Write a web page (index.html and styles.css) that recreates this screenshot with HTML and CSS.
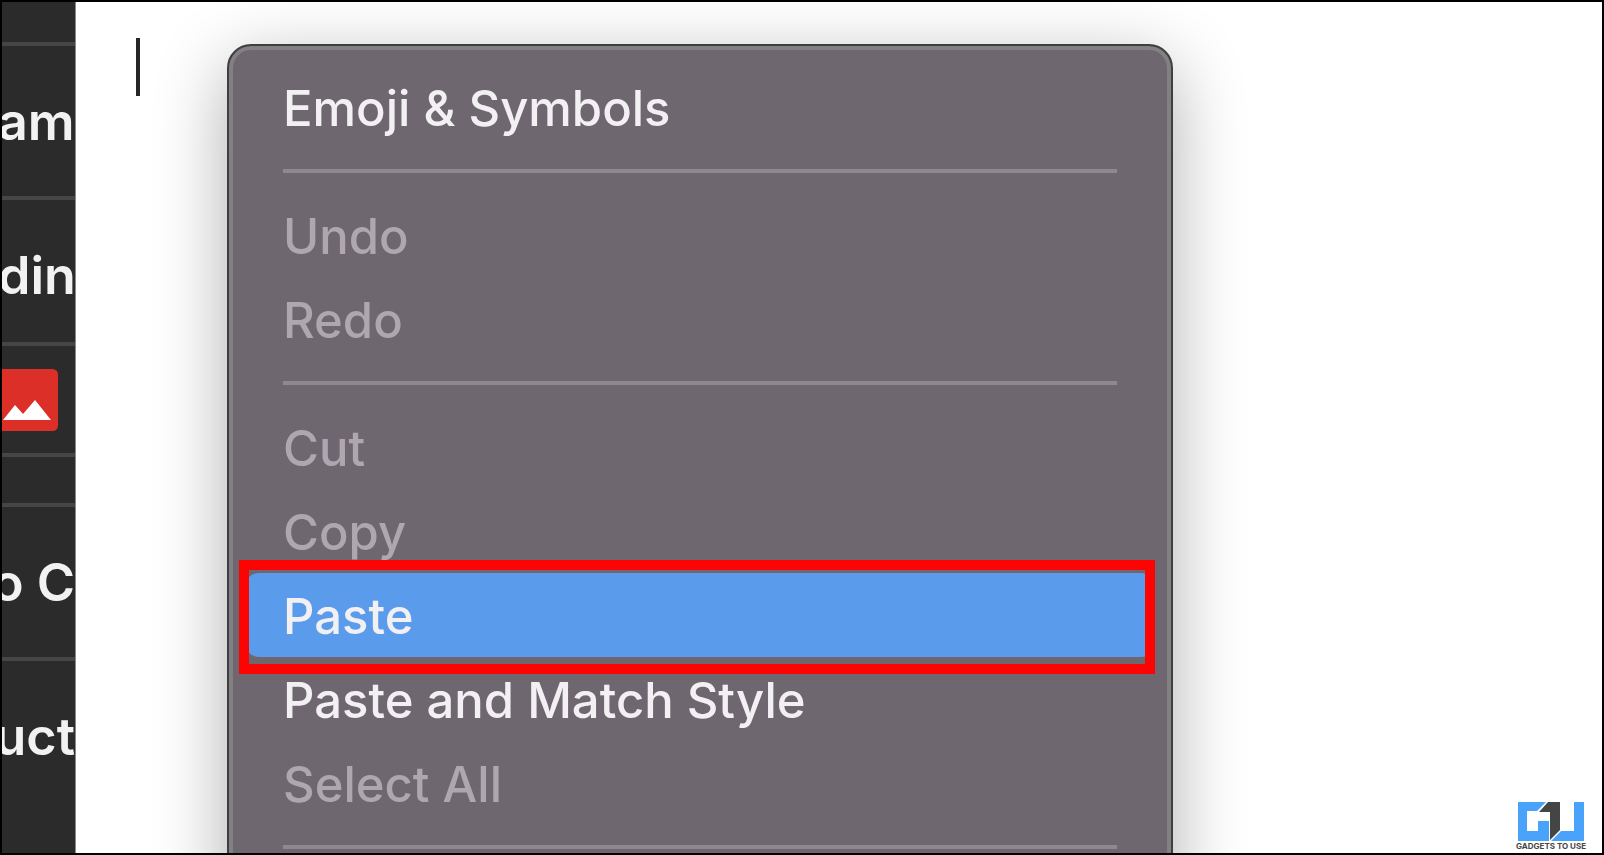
FILE: index.html
```
<!DOCTYPE html>
<html lang="en">
<head>
  <meta charset="UTF-8">
  <meta name="viewport" content="width=device-width, initial-scale=1.0">
  <title>Paste</title>
  <link rel="stylesheet" href="styles.css">
</head>
<body>
  <div class="window">
    <aside class="sidebar">
      <div class="cell head"></div>
      <div class="cell tall">am</div>
      <div class="cell medium">din</div>
      <div class="cell icon">
        <svg class="picture" viewBox="0 0 56 62" aria-hidden="true">
          <path d="M0 0H50Q56 0 56 6V56Q56 62 50 62H0Z" fill="#db2f27"/>
          <path d="M1 51L13 36L21 45L33 31L49 51Z" fill="#fff"/>
        </svg>
      </div>
      <div class="cell short"></div>
      <div class="cell tall end">o C</div>
      <div class="cell tall end">uct</div>
    </aside>

    <main class="editor">
      <div class="caret"></div>

      <div class="menu" role="menu">
        <button class="item" role="menuitem">Emoji &amp; Symbols</button>
        <hr>
        <button class="item" role="menuitem" disabled>Undo</button>
        <button class="item" role="menuitem" disabled>Redo</button>
        <hr>
        <button class="item" role="menuitem" disabled>Cut</button>
        <button class="item" role="menuitem" disabled>Copy</button>
        <div class="marked">
          <button class="item active" role="menuitem">Paste</button>
        </div>
        <button class="item" role="menuitem">Paste and Match Style</button>
        <button class="item" role="menuitem" disabled>Select All</button>
        <hr>
      </div>

      <div class="logo">
        <svg viewBox="0 0 66 39" aria-hidden="true">
          <path d="M0 0H28L19 9H9V29H20V19H31V39H0Z" fill="#4aa3fb"/>
          <path d="M56 0H66V39H33L43 29H56Z" fill="#4aa3fb"/>
          <path d="M30 0H42V28L32 38V10H21Z" fill="#454545"/>
        </svg>
        <span>GADGETS TO USE</span>
      </div>
    </main>
  </div>
</body>
</html>
```
FILE: styles.css
```
* {
  box-sizing: border-box;
}
body {
  margin: 0;
  font-family: Inter, "Liberation Sans", sans-serif;
  background-color: #fff;
}
.window {
  display: flex;
  height: 100vh;
  border: 2px solid #000;
  overflow: hidden;
}

/* sidebar */
.sidebar {
  flex: none;
  width: 74px;
  overflow: hidden;
  background-color: #2b2b2b;
  border-right: 1px solid #8a8a8a;
  color: #f2f2f2;
  font-size: 52px;
  font-weight: 600;
  line-height: 152px;
}
.cell {
  display: flex;
  border-bottom: 4px solid #464646;
  white-space: nowrap;
}
.cell.head {
  height: 44px;
}
.cell.tall {
  height: 154px;
}
.cell.medium {
  height: 146px;
}
.cell.tall,
.cell.medium {
  margin-left: -4px;
}
.cell.icon {
  height: 111px;
  align-items: center;
}
.cell.short {
  height: 50px;
}
.cell.end {
  justify-content: flex-end;
}
.cell:last-child {
  border-bottom: none;
}
.picture {
  flex: none;
  width: 56px;
  height: 62px;
}

/* editor */
.editor {
  position: relative;
  flex: 1;
  overflow: hidden;
}
.caret {
  width: 4px;
  height: 58px;
  margin: 36px 60px;
  background-color: #262626;
}

/* context menu */
.menu {
  position: absolute;
  top: 42px;
  left: 151px;
  width: 946px;
  height: 900px;
  padding: 19px 16px;
  background-color: #6f676f;
  border: 2px solid #3f3f3f;
  border-radius: 24px;
  box-shadow: inset 0 0 0 4px #838083, 0 20px 72px rgba(0, 0, 0, 0.32);
}
.item {
  display: block;
  width: 100%;
  height: 84px;
  padding: 3px 38px 0;
  border: none;
  border-radius: 14px;
  background: none;
  color: #f2f0f3;
  font-family: inherit;
  font-size: 49px;
  font-weight: 500;
  line-height: 60px;
  text-align: left;
}
.item:disabled {
  color: #aea7b0;
}
.item.active {
  background-color: #5b9bec;
}
.menu hr {
  height: 4px;
  margin: 20px 38px;
  border: none;
  background-color: #8f8890;
}
.marked {
  position: relative;
}
.marked::after {
  content: "";
  position: absolute;
  top: -13px;
  right: 0;
  bottom: -17px;
  left: -6px;
  border: 10px solid #fc0404;
}

/* watermark */
.logo {
  position: absolute;
  right: 16px;
  bottom: 2px;
  display: flex;
  flex-direction: column;
  align-items: center;
  color: #454545;
  font-size: 8px;
  font-weight: 700;
  line-height: 10px;
}
.logo svg {
  width: 66px;
  height: 39px;
}
```
